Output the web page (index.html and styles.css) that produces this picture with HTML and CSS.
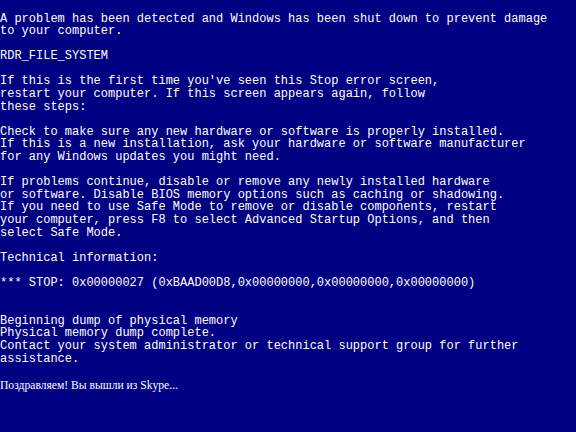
FILE: index.html
```html
<!DOCTYPE html>
<html lang="en">
<head>
<meta charset="utf-8">
<title>Stop error</title>
<link rel="stylesheet" href="styles.css">
</head>
<body>
<main class="screen">
<p class="para">A problem has been detected and Windows has been shut down to prevent damage
to your computer.</p>
<p class="para">RDR_FILE_SYSTEM</p>
<p class="para">If this is the first time you've seen this Stop error screen,
restart your computer. If this screen appears again, follow
these steps:</p>
<p class="para">Check to make sure any new hardware or software is properly installed.
If this is a new installation, ask your hardware or software manufacturer
for any Windows updates you might need.</p>
<p class="para">If problems continue, disable or remove any newly installed hardware
or software. Disable BIOS memory options such as caching or shadowing.
If you need to use Safe Mode to remove or disable components, restart
your computer, press F8 to select Advanced Startup Options, and then
select Safe Mode.</p>
<p class="para">Technical information:</p>
<p class="para stop">*** STOP: 0x00000027 (0xBAAD00D8,0x00000000,0x00000000,0x00000000)</p>
<p class="para">Beginning dump of physical memory
Physical memory dump complete.
Contact your system administrator or technical support group for further
assistance.</p>
<p class="note" lang="ru">Поздравляем! Вы вышли из Skype...</p>
</main>
</body>
</html>
```
FILE: styles.css
```css
html, body {
  margin: 0;
  padding: 0;
  background: #000082;
  width: 576px;
  height: 432px;
  overflow: hidden;
}

.screen {
  padding: 12.5px 0 0 0;
  color: #ffffff;
  font-family: "Liberation Mono", "DejaVu Sans Mono", monospace;
  font-size: 12px;
  line-height: 12.6px;
}

.para {
  margin: 0 0 12.6px 0;
  white-space: pre;
}

.stop {
  margin-bottom: 25.2px;
}

.note {
  margin: 0;
  padding-top: 2px;
  font-family: "Liberation Serif", "DejaVu Serif", serif;
  font-size: 11.6px;
  line-height: 12.6px;
  white-space: pre;
}
```
